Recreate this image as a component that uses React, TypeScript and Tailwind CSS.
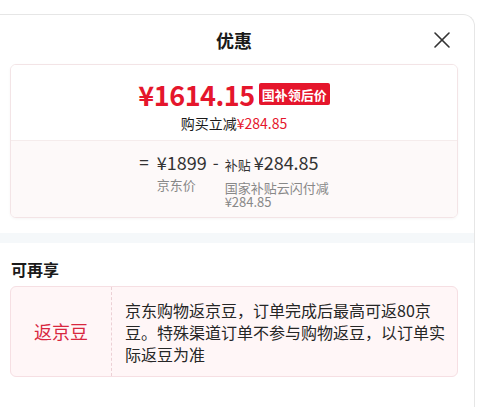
import { X } from 'lucide-react';

export default function App() {
  return (
    <div className="w-[478px] h-[407px] bg-white overflow-hidden font-['Noto_Sans_CJK_SC','Noto_Sans',sans-serif]">
      <div className="mt-[14px] -ml-[6px] w-[481px] h-[393px] border-t border-r border-[#e6e6e6] rounded-tr-[12px]">
        {/* Header */}
        <div className="relative h-[49px] flex items-center justify-center">
          <span className="text-[18px] font-bold text-[#1a1a1a] leading-none">优惠</span>
          <X className="absolute right-[18px] top-[11px] w-[28px] h-[28px] text-[#333]" strokeWidth={1.4} />
        </div>

        {/* Price card */}
        <div className="mx-4 rounded-[6px] border border-[#f3e4e6] shadow-[0_1px_3px_rgba(0,0,0,0.04)] overflow-hidden">
          <div className="h-[75px] flex flex-col items-center bg-white">
            <div className="flex items-center mt-[14px] h-[30px]">
              <span className="text-[27px] font-bold text-[#e5162c] leading-none tracking-[-0.5px]">¥1614.15</span>
              <span className="ml-[4px] h-[22px] px-[3px] flex items-center bg-[#e5162c] text-white text-[13px] font-bold rounded-[2px] leading-none">国补领后价</span>
            </div>
            <div className="mt-[4px] text-[14px] leading-[20px] text-[#1a1a1a]">
              购买立减<span className="text-[#e5162c]">¥284.85</span>
            </div>
          </div>
          <div className="h-[77px] bg-[#fdf9f9] border-t border-[#f5ecec] flex justify-center pt-[9px]">
            <div className="flex items-start text-[#333]">
              <span className="text-[17px] leading-[24px] mr-[8px]">=</span>
              <div className="flex flex-col">
                <span className="text-[18px] leading-[24px]">¥1899</span>
                <span className="text-[13px] leading-[14px] text-[#888] mt-[4px]">京东价</span>
              </div>
              <span className="text-[17px] leading-[24px] mx-[6px]">-</span>
              <div className="flex flex-col">
                <div className="flex items-baseline">
                  <span className="text-[13px] leading-[24px] mr-[3px]">补贴</span>
                  <span className="text-[18px] leading-[24px]">¥284.85</span>
                </div>
                <span className="text-[13px] leading-[14px] text-[#888] mt-[4px]">
                  国家补贴云闪付减
                  <br />
                  ¥284.85
                </span>
              </div>
            </div>
          </div>
        </div>

        {/* Divider band */}
        <div className="mt-[15px] h-[10px] bg-[#f5f8fa]" />

        {/* Extra benefits */}
        <div className="pl-[17px] pt-[16px] text-[16px] font-bold leading-[20px] text-[#1a1a1a]">可再享</div>
        <div className="mx-4 mt-[7px] h-[91px] flex rounded-[6px] border border-[#f6dfe3] bg-[#fff6f7]">
          <div className="w-[101px] flex items-center justify-center border-r border-dashed border-[#ecd0d5]">
            <span className="text-[18px] text-[#d8283f]">返京豆</span>
          </div>
          <div className="flex-1 flex items-center pl-[13px] pr-[11px]">
            <p className="text-[16px] leading-[22px] text-[#262626]">
              京东购物返京豆，订单完成后最高可返80京豆。特殊渠道订单不参与购物返豆，以订单实际返豆为准
            </p>
          </div>
        </div>
      </div>
    </div>
  );
}
